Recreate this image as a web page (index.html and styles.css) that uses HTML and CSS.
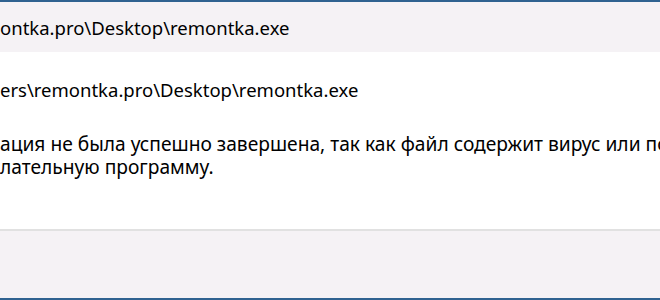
FILE: index.html
```html
<!DOCTYPE html>
<html lang="ru">
<head>
<meta charset="utf-8">
<link rel="stylesheet" href="styles.css">
</head>
<body>
<div class="dialog">
  <header class="head"><span class="title">ontka.pro\Desktop\remontka.exe</span></header>
  <main class="content">
    <p class="path">ers\remontka.pro\Desktop\remontka.exe</p>
    <p class="msg">ация не была успешно завершена, так как файл содержит вирус или по<br>лательную программу.</p>
  </main>
  <footer class="foot"></footer>
</div>
</body>
</html>
```
FILE: styles.css
```css
html, body {
  margin: 0;
  padding: 0;
  width: 660px;
  height: 300px;
  overflow: hidden;
  background: #ffffff;
}
.dialog {
  display: flex;
  flex-direction: column;
  height: 300px;
  font-family: "Noto Sans", "Open Sans", sans-serif;
  font-size: 18.5px;
  color: #000;
}
.head {
  height: 50px;
  border-top: 2px solid #2f6290;
  background: #f5f2f5;
  display: flex;
  align-items: center;
  white-space: nowrap;
  overflow: hidden;
}
.content {
  flex: 1;
  background: #fff;
  padding-top: 26px;
  white-space: nowrap;
  overflow: hidden;
}
.content p {
  margin: 0;
  line-height: 23px;
}
.path {
  margin-bottom: 31px !important;
}
.msg {
  font-size: 19.2px;
}
.foot {
  height: 67px;
  border-top: 2px solid #e1e1e1;
  border-bottom: 2px solid #2f6290;
  background: #f5f2f5;
}
```
